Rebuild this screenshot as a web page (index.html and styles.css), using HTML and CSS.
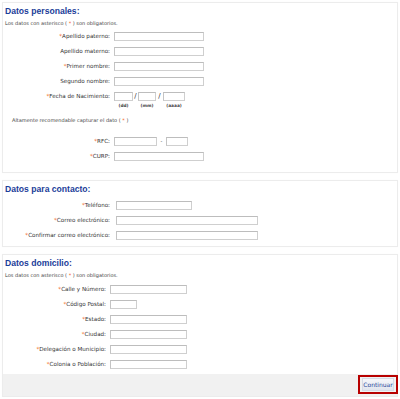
FILE: index.html
```html
<!DOCTYPE html>
<html lang="es">
<head>
<meta charset="utf-8">
<title>Datos</title>
<link rel="stylesheet" href="styles.css">
</head>
<body>
<div class="panel p1">
  <h2 class="title">Datos personales:</h2>
  <p class="note">Los datos con asterisco ( <span class="req">*</span> ) son obligatorios.</p>
  <div class="rows">
    <div class="row"><label><span class="req">*</span>Apellido paterno:</label><span class="inp w90"></span></div>
    <div class="row"><label>Apellido materno:</label><span class="inp w90"></span></div>
    <div class="row"><label><span class="req">*</span>Primer nombre:</label><span class="inp w90"></span></div>
    <div class="row"><label>Segundo nombre:</label><span class="inp w90"></span></div>
    <div class="row"><label><span class="req">*</span>Fecha de Nacimiento:</label><span class="inp w19"></span><span class="sep s5">/</span><span class="inp w18"></span><span class="sep s7">/</span><span class="inp w22"></span></div>
  </div>
  <div class="hints"><span class="hint w19">(dd)</span><span class="s5"></span><span class="hint w18">(mm)</span><span class="s7"></span><span class="hint w22">(aaaa)</span></div>
  <p class="note rec">Altamente recomendable capturar el dato ( <span class="req">*</span> )</p>
  <div class="rows rfc">
    <div class="row"><label><span class="req">*</span>RFC:</label><span class="inp w43"></span><span class="sep s9">-</span><span class="inp w22"></span></div>
    <div class="row"><label><span class="req">*</span>CURP:</label><span class="inp w90"></span></div>
  </div>
</div>

<div class="panel p2">
  <h2 class="title">Datos para contacto:</h2>
  <div class="rows">
    <div class="row"><label><span class="req">*</span>Teléfono:</label><span class="inp w76"></span></div>
    <div class="row"><label><span class="req">*</span>Correo electrónico:</label><span class="inp w142"></span></div>
    <div class="row"><label><span class="req">*</span>Confirmar correo electrónico:</label><span class="inp w142"></span></div>
  </div>
</div>

<div class="panel p3">
  <h2 class="title">Datos domicilio:</h2>
  <p class="note">Los datos con asterisco ( <span class="req">*</span> ) son obligatorios.</p>
  <div class="rows">
    <div class="row"><label><span class="req">*</span>Calle y Número:</label><span class="inp w77"></span></div>
    <div class="row"><label><span class="req">*</span>Código Postal:</label><span class="inp w27"></span></div>
    <div class="row"><label><span class="req">*</span>Estado:</label><span class="inp w77"></span></div>
    <div class="row"><label><span class="req">*</span>Ciudad:</label><span class="inp w77"></span></div>
    <div class="row"><label><span class="req">*</span>Delegación o Municipio:</label><span class="inp w77"></span></div>
    <div class="row"><label><span class="req">*</span>Colonia o Población:</label><span class="inp w77"></span></div>
  </div>
  <div class="footer">
    <div class="mark"><button class="btn" type="button">Continuar</button></div>
  </div>
</div>
</body>
</html>
```

FILE: styles.css
```css
html, body {
  margin: 0;
  padding: 0;
  background: #fff;
}
body {
  font-family: "DejaVu Sans", Verdana, sans-serif;
  color: #333;
  padding-top: 2px;
}
.panel {
  margin: 0 2px;
  border: 1px solid #ececec;
  box-shadow: 0 0 1px rgba(0,0,0,0.04);
}
.p1 { padding: 3px 0 11px; }
.p2 { margin-top: 7px; padding: 3px 0 6px; }
.p3 { margin-top: 7px; padding: 3px 0 0; }
.title {
  margin: 0 0 0 2px;
  font-family: "Liberation Sans", Arial, sans-serif;
  font-weight: bold;
  font-size: 8.6px;
  line-height: 10px;
  color: #1b3d99;
}
.note {
  margin: 4px 0 0 2px;
  font-size: 5px;
  line-height: 6px;
  color: #444;
}
.req { color: #f26522; }
.rows { margin-top: 6px; display: flex; flex-direction: column; gap: 6px; }
.p3 .rows { margin-top: 7px; }
.p2 .rows { margin-top: 7px; }
.row {
  display: flex;
  align-items: center;
  height: 9px;
}
.row label {
  width: 107px;
  padding-right: 4px;
  text-align: right;
  font-size: 5.6px;
  line-height: 9px;
  white-space: nowrap;
  color: #333;
}
.p2 .row label { padding-right: 6px; }
.p3 .row label { width: 103px; padding-right: 4px; }
.inp {
  display: block;
  height: 9px;
  box-sizing: border-box;
  border: 1px solid #cfcfcf;
  border-top-color: #bdbdbd;
  border-left-color: #c4c4c4;
  background: #fff;
}
.w90 { width: 90px; }
.w19 { width: 19px; }
.w18 { width: 18px; }
.w22 { width: 22px; }
.w43 { width: 43px; }
.w76 { width: 76px; }
.w142 { width: 142px; }
.w77 { width: 77px; }
.w27 { width: 27px; }
.sep {
  text-align: center;
  font-size: 7px;
  line-height: 9px;
  color: #333;
}
.s5 { width: 5px; display: block; }
.s7 { width: 7px; display: block; }
.s9 { width: 9px; display: block; font-size: 5px; }
.hints {
  display: flex;
  margin: 2px 0 0 111px;
  height: 6px;
}
.hint {
  display: block;
  text-align: center;
  font-size: 4.3px;
  line-height: 6px;
  color: #444;
  font-weight: bold;
}
.rec { margin: 8px 0 0 9px; }
.rfc { margin-top: 14px; }
.footer {
  margin-top: 5px;
  height: 22px;
  background: #f1f1f1;
  display: flex;
  justify-content: flex-end;
  align-items: flex-start;
  padding-top: 1px;
  box-sizing: border-box;
}
.mark {
  width: 40px;
  height: 19px;
  box-sizing: border-box;
  border: 2px solid #b80000;
  margin-right: -1px;
  display: flex;
  align-items: center;
  justify-content: center;
}
.btn {
  width: 32px;
  height: 13px;
  padding: 0;
  margin: 0;
  border: 1px solid #d6dbe6;
  background: linear-gradient(#f6f7fa, #e1e5ee);
  font-family: "DejaVu Sans", Verdana, sans-serif;
  font-size: 6px;
  color: #2b4a9a;
}
```
